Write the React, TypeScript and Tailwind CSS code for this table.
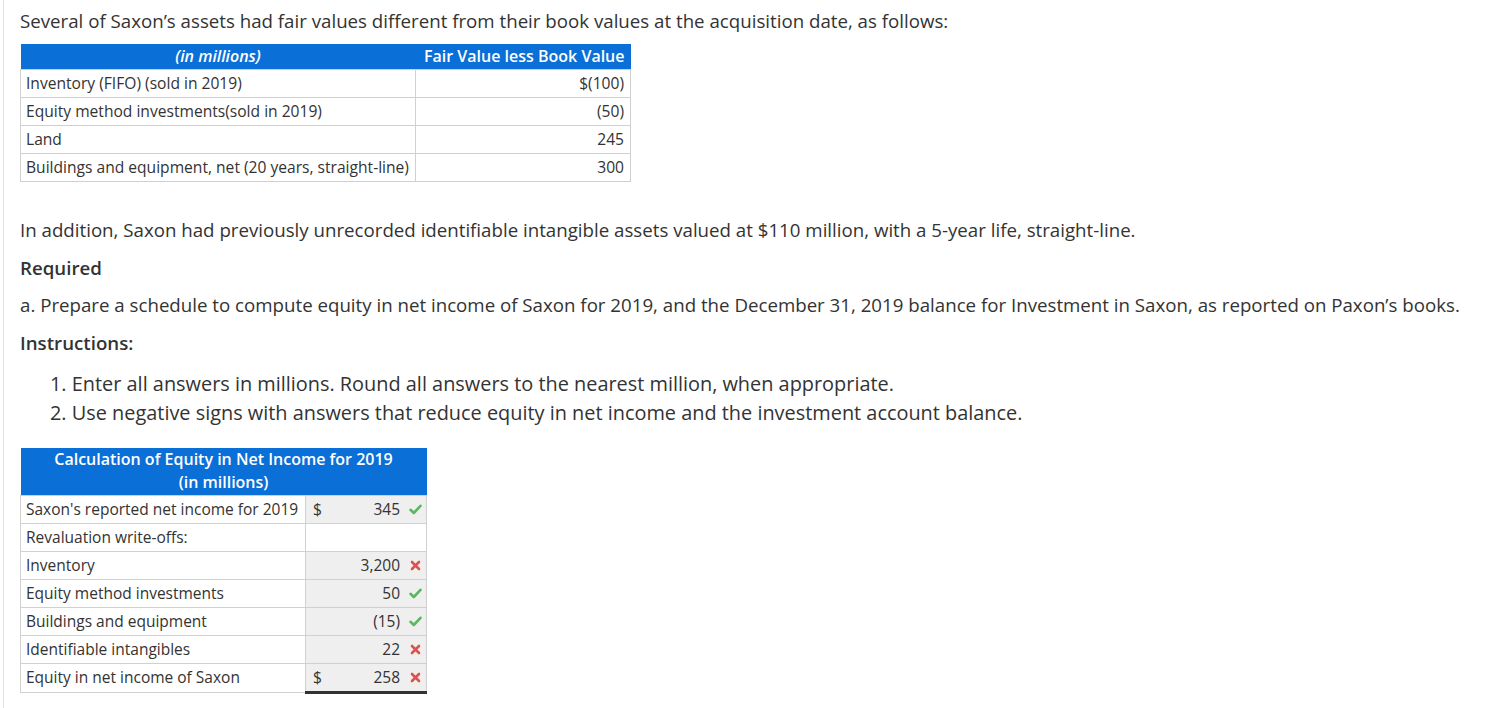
import React from "react";

const Check = () => (
  <svg width="13" height="11" viewBox="0 0 13 11" className="inline-block">
    <path d="M1.5 5.8 L4.8 9 L11.5 1.8" stroke="#5cb85c" strokeWidth="2.6" fill="none" strokeLinecap="round" strokeLinejoin="round" />
  </svg>
);
const Cross = () => (
  <svg width="11" height="11" viewBox="0 0 11 11" className="inline-block">
    <path d="M2 2 L9 9 M9 2 L2 9" stroke="#d9534f" strokeWidth="2.6" fill="none" strokeLinecap="round" />
  </svg>
);

const rows1 = [
  ["Inventory (FIFO) (sold in 2019)", "$(100)"],
  ["Equity method investments(sold in 2019)", "(50)"],
  ["Land", "245"],
  ["Buildings and equipment, net (20 years, straight-line)", "300"],
];

type R2 = { label: string; dollar?: boolean; value?: string; ok?: boolean; blank?: boolean; total?: boolean };
const rows2: R2[] = [
  { label: "Saxon's reported net income for 2019", dollar: true, value: "345", ok: true },
  { label: "Revaluation write-offs:", blank: true },
  { label: "Inventory", value: "3,200", ok: false },
  { label: "Equity method investments", value: "50", ok: true },
  { label: "Buildings and equipment", value: "(15)", ok: true },
  { label: "Identifiable intangibles", value: "22", ok: false },
  { label: "Equity in net income of Saxon", dollar: true, value: "258", ok: false, total: true },
];

export default function App() {
  return (
    <div
      className="w-[1502px] h-[708px] bg-white text-[#333] overflow-hidden border-l border-[#e4e4e4] ml-[3px]"
      style={{ fontFamily: '"Open Sans", "Liberation Sans", sans-serif' }}
    >
      <div className="pl-[16px] pt-[8px]">
        <p className="text-[18.7px] leading-[26px] whitespace-nowrap">
          Several of Saxon’s assets had fair values different from their book values at the acquisition date, as follows:
        </p>
        <table className="mt-[10px] border-collapse table-fixed w-[610px] text-[15.6px]">
          <colgroup>
            <col className="w-[395px]" />
            <col className="w-[215px]" />
          </colgroup>
          <thead>
            <tr className="bg-[#0b6fd8] text-white">
              <th className="h-[25px] p-0 font-semibold italic text-center leading-[25px] text-[16px]">(in millions)</th>
              <th className="h-[25px] p-0 pr-[6px] font-semibold text-right leading-[25px] text-[16px]">Fair Value less Book Value</th>
            </tr>
          </thead>
          <tbody>
            {rows1.map(([l, v]) => (
              <tr key={l} className="h-[28px]">
                <td className="border border-[#d0d0d0] px-[5px] leading-[27px] p-0 whitespace-nowrap">{l}</td>
                <td className="border border-[#d0d0d0] pr-[6px] text-right leading-[27px] p-0">{v}</td>
              </tr>
            ))}
          </tbody>
        </table>

        <p className="mt-[35px] text-[18.7px] leading-[26px] whitespace-nowrap">
          In addition, Saxon had previously unrecorded identifiable intangible assets valued at $110 million, with a 5-year life, straight-line.
        </p>
        <p className="mt-[12px] text-[18.7px] leading-[26px] font-semibold">Required</p>
        <p className="mt-[11px] text-[18.7px] leading-[26px] whitespace-nowrap">
          a. Prepare a schedule to compute equity in net income of Saxon for 2019, and the December 31, 2019 balance for Investment in Saxon, as reported on Paxon’s books.
        </p>
        <p className="mt-[12px] text-[18.7px] leading-[26px] font-semibold">Instructions:</p>
        <ol className="mt-[13px] pl-[30px] text-[19.9px] leading-[29px] whitespace-nowrap">
          <li>1. Enter all answers in millions. Round all answers to the nearest million, when appropriate.</li>
          <li>2. Use negative signs with answers that reduce equity in net income and the investment account balance.</li>
        </ol>

        <table className="mt-[21px] border-collapse table-fixed w-[406px] text-[15.5px]">
          <colgroup>
            <col className="w-[285px]" />
            <col className="w-[121px]" />
          </colgroup>
          <thead>
            <tr className="bg-[#0b6fd8] text-white">
              <th colSpan={2} className="h-[47px] p-0 font-semibold text-center leading-[23px] text-[16px]">
                Calculation of Equity in Net Income for 2019
                <br />
                (in millions)
              </th>
            </tr>
          </thead>
          <tbody>
            {rows2.map((r) => (
              <tr key={r.label} className="h-[28px]">
                <td className="border border-[#d0d0d0] px-[5px] leading-[27px] p-0 whitespace-nowrap">{r.label}</td>
                <td
                  className={
                    "border border-[#d0d0d0] p-0 leading-[27px] " +
                    (r.blank ? "bg-white " : "bg-[#efefef] ") +
                    (r.total ? "border-t-black border-t-[1.5px] border-b-[3px] border-b-double border-b-[#333]" : "")
                  }
                >
                  {!r.blank && (
                    <div className="flex items-center pl-[7px] pr-[4px]">
                      <span className="w-[12px]">{r.dollar ? "$" : ""}</span>
                      <span className="flex-1 text-right pr-[9px]">{r.value}</span>
                      <span className="w-[13px] flex items-center justify-center">{r.ok ? <Check /> : <Cross />}</span>
                    </div>
                  )}
                </td>
              </tr>
            ))}
          </tbody>
        </table>
      </div>
    </div>
  );
}
